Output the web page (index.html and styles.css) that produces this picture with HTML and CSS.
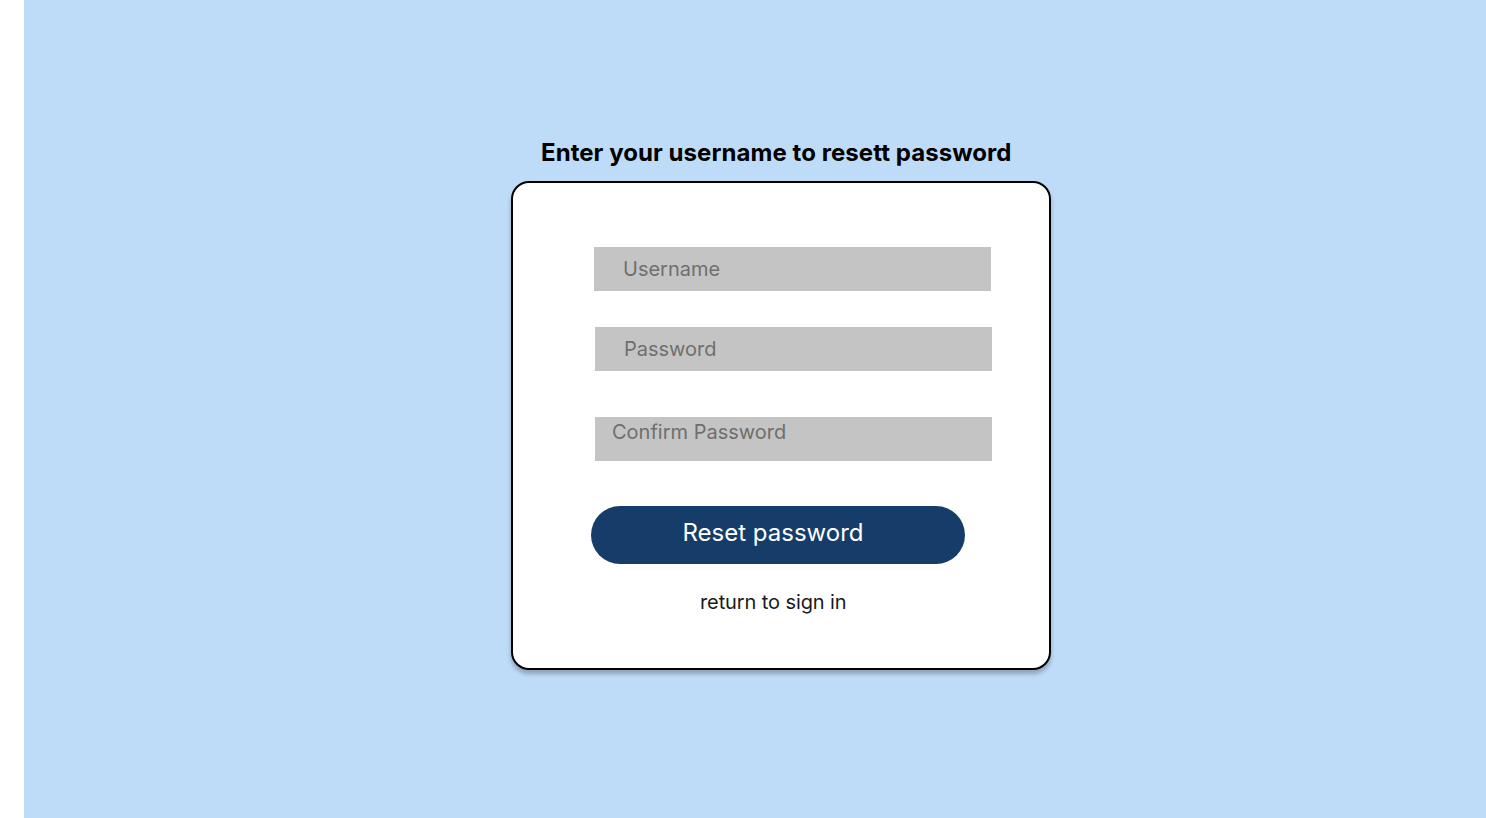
FILE: index.html
```html
<!DOCTYPE html>
<html lang="en">
<head>
<meta charset="utf-8">
<title>Reset password</title>
<link rel="stylesheet" href="styles.css">
</head>
<body>
<main class="stage">
  <h1 class="title">Enter your username to resett password</h1>
  <form class="card">
    <div class="field field-user"><span class="ph">Username</span></div>
    <div class="field field-pass"><span class="ph">Password</span></div>
    <div class="field field-confirm"><span class="ph">Confirm Password</span></div>
    <button type="button" class="btn">Reset password</button>
    <a class="link">return to sign in</a>
  </form>
</main>
</body>
</html>
```
FILE: styles.css
```css
* { box-sizing: border-box; }
html, body { margin: 0; padding: 0; background: #ffffff; }
body { font-family: Inter, "Noto Sans", sans-serif; }

.stage {
  margin-left: 24px;
  height: 818px;
  background: #bedbf7;
  padding-top: 138px;
  display: flex;
  flex-direction: column;
  align-items: flex-start;
  overflow: hidden;
}

.title {
  margin: 0 0 14px 517px;
  font-size: 24px;
  line-height: 29px;
  font-weight: 700;
  color: #000;
  letter-spacing: 0.06px;
}

.card {
  margin-left: 487px;
  width: 540px;
  height: 489px;
  background: #fff;
  border: 2px solid #000;
  border-radius: 18px;
  box-shadow: 0 4px 4px rgba(0, 0, 0, 0.25);
  padding-top: 64px;
  display: flex;
  flex-direction: column;
  align-items: flex-start;
}

.field {
  width: 397px;
  height: 44px;
  background: #c4c4c4;
  display: flex;
  align-items: center;
  font-size: 20px;
  line-height: 24px;
  color: #6f6f6f;
}
.field-user { margin-left: 81px; padding-left: 29px; }
.field-pass { margin-left: 82px; margin-top: 36px; padding-left: 29px; }
.field-confirm {
  margin-left: 82px;
  margin-top: 46px;
  padding-left: 17px;
  align-items: flex-start;
  padding-top: 3px;
}

.btn {
  margin-left: 78px;
  margin-top: 45px;
  width: 374px;
  height: 58px;
  border: 0;
  border-radius: 29px;
  background: #163d69;
  color: #fff;
  font-family: Inter, "Noto Sans", sans-serif;
  font-size: 24px;
  font-weight: 400;
  padding: 0 10px 6px 0;
}

.link {
  margin-left: 187px;
  margin-top: 26px;
  font-size: 20px;
  line-height: 24px;
  color: #1a1a1a;
  letter-spacing: -0.1px;
}
```
